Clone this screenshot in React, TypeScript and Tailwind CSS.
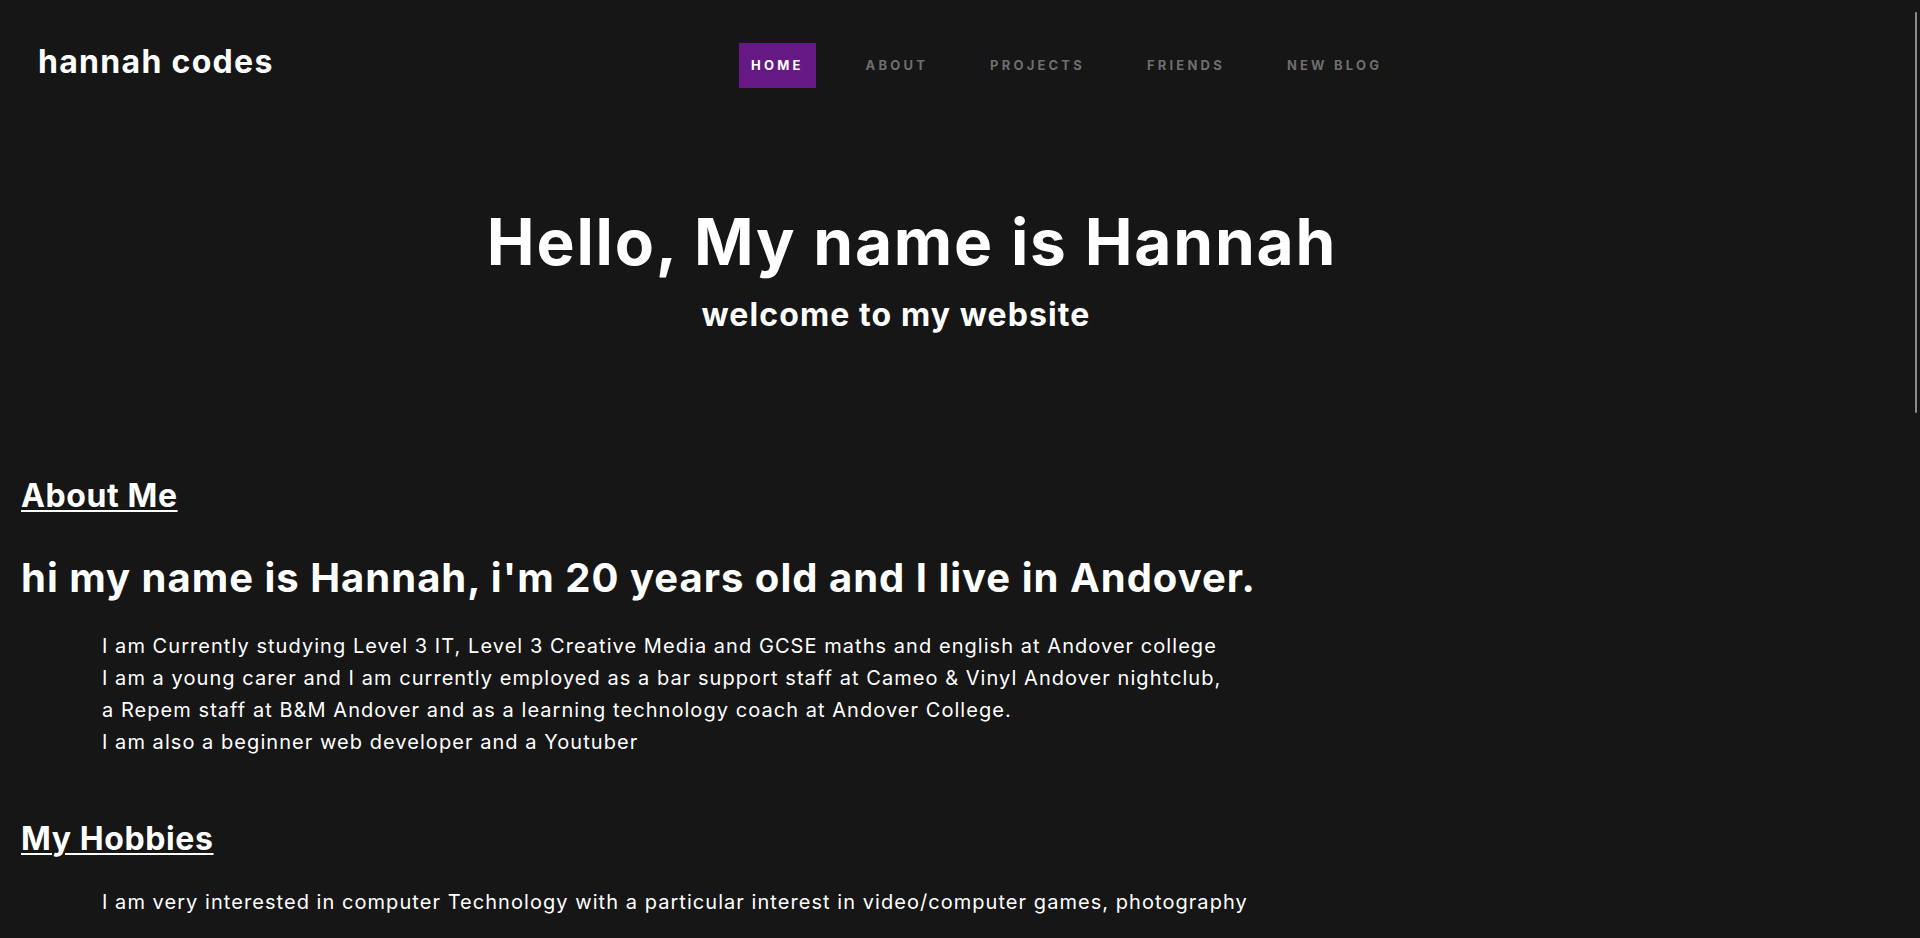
const NAV = ['HOME', 'ABOUT', 'PROJECTS', 'FRIENDS', 'NEW BLOG'];

function Header() {
  return (
    <header className="flex items-start pt-[42px] pl-[38px]">
      <a className="w-[701px] flex-none text-[32px] leading-[40px] font-bold tracking-[1.3px] text-white">
        hannah codes
      </a>
      <nav className="mt-px flex gap-[38px]">
        {NAV.map((item, i) => (
          <a
            key={item}
            className={
              i === 0
                ? 'bg-[#661884] px-3 text-[13px] leading-[45px] font-bold tracking-[3.2px] text-white'
                : 'px-3 text-[13px] leading-[45px] font-bold tracking-[3.2px] text-[#6e6e6e]'
            }
          >
            {item}
          </a>
        ))}
      </nav>
    </header>
  );
}

function Hero() {
  return (
    <section className="flex flex-col items-center pt-[116px] text-white">
      <h1 className="pr-[96px] text-[64px] leading-[76.8px] font-bold tracking-[1.8px]">
        Hello, My name is Hannah
      </h1>
      <h2 className="mt-[14px] pr-[128px] text-[32px] leading-[40px] font-bold tracking-[1.1px]">
        welcome to my website
      </h2>
    </section>
  );
}

export default function App() {
  return (
    <div
      className="relative h-[938px] overflow-hidden bg-[#161616]"
      style={{ fontFamily: 'Inter, "Noto Sans", sans-serif' }}
    >
      <Header />
      <Hero />

      <main className="pl-[21px] text-white">
        <h3 className="mt-[141px] text-[32px] leading-[40px] font-bold tracking-[0.6px] underline decoration-2 underline-offset-[3px]">
          About Me
        </h3>
        <h2 className="mt-[38px] text-[40px] leading-[48px] font-bold tracking-[1px]">
          hi my name is Hannah, i'm 20 years old and I live in Andover.
        </h2>
        <p className="mt-[28px] pl-[81px] text-[20px] leading-[32px] tracking-[1.05px]">
          I am Currently studying Level 3 IT, Level 3 Creative Media and GCSE maths and english at Andover college
          <br />
          I am a young carer and I am currently employed as a bar support staff at Cameo &amp; Vinyl Andover nightclub,
          <br />
          a Repem staff at B&amp;M Andover and as a learning technology coach at Andover College.
          <br />
          I am also a beginner web developer and a Youtuber
        </p>

        <h3 className="mt-[61px] text-[32px] leading-[40px] font-bold tracking-[0.6px] underline decoration-2 underline-offset-[3px]">
          My Hobbies
        </h3>
        <p className="mt-[27px] pl-[81px] text-[20px] leading-[32px] tracking-[1.05px]">
          I am very interested in computer Technology with a particular interest in video/computer games, photography
        </p>
      </main>

      {/* overlay scrollbar thumb */}
      <div className="absolute top-[12px] right-[3px] h-[401px] w-[2px] rounded-full bg-[#8c8c8c]" />
    </div>
  );
}
